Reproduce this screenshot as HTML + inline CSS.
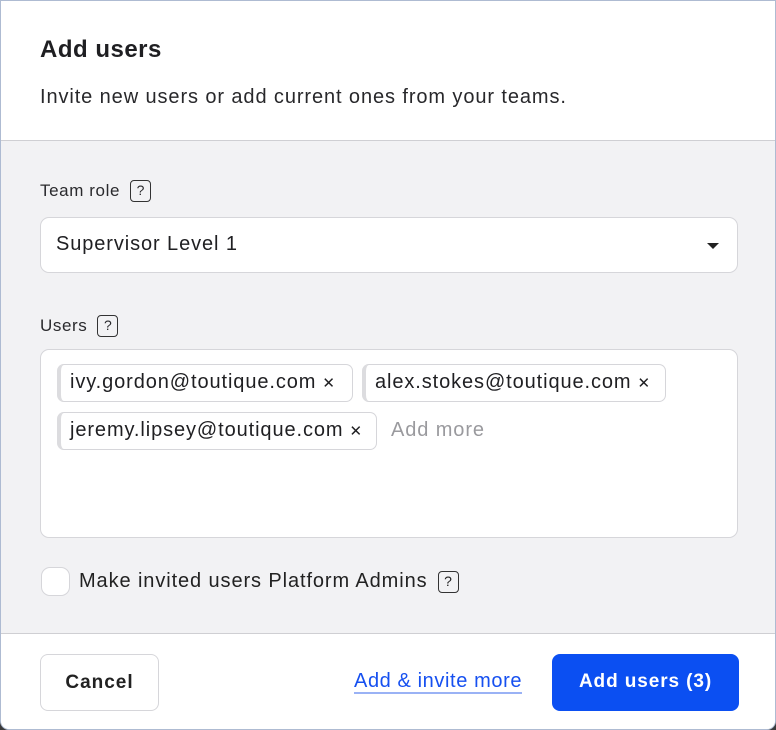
<!DOCTYPE html>
<html><head><style>
*{box-sizing:border-box;margin:0;padding:0}
body{width:776px;height:730px;background:#3a3a3a;font-family:"Liberation Sans",sans-serif;color:#1f1f22;overflow:hidden}
.m{position:absolute;left:0;top:0;width:776px;height:730px;background:#f2f2f4;border:1px solid #aebbd2;border-radius:0 0 9px 9px;overflow:hidden}
.hd{position:absolute;left:0;top:0;width:100%;height:140px;background:#fff;border-bottom:1px solid #cfcfd3}
h1{position:absolute;left:39px;top:35px;font-size:24px;font-weight:600;letter-spacing:0.5px}
.sub{position:absolute;left:39px;top:85px;font-size:20px;letter-spacing:0.9px;color:#28282b}
.lbl{position:absolute;left:39px;font-size:17px;letter-spacing:0.6px;color:#2a2a2d;display:flex;align-items:center}
.q{display:inline-block;width:21px;height:22px;border:1.5px solid #333;border-radius:4px;font-size:14px;letter-spacing:0;text-align:center;line-height:19px;margin-left:10px;font-weight:400}
.sel{position:absolute;left:39px;top:216px;width:698px;height:56px;background:#fff;border:1px solid #d6d6da;border-radius:9px;font-size:20px;letter-spacing:0.9px;padding:15px 15px}
.tri{position:absolute;right:18px;top:25px;width:0;height:0;border-left:6px solid transparent;border-right:6px solid transparent;border-top:6px solid #222}
.ub{position:absolute;left:39px;top:348px;width:698px;height:189px;background:#fff;border:1px solid #d6d6da;border-radius:9px}
.chip{position:absolute;height:38px;border:1px solid #d6d6da;border-left:4px solid #dcdcdf;border-radius:7px;font-size:20px;letter-spacing:0.9px;padding:6px 8px 0 9px;white-space:nowrap}
.chip span{font-size:15px;margin-left:6px;letter-spacing:0}
.ph{position:absolute;left:350px;top:69px;font-size:20px;letter-spacing:0.9px;color:#9a9a9e}
.cb{position:absolute;left:40px;top:566px;width:29px;height:29px;border:1px solid #d6d6da;background:#fff;border-radius:9px}
.ft{position:absolute;left:0;top:632px;width:100%;height:98px;background:#fff;border-top:1px solid #cfcfd3}
.btn{position:absolute;top:20px;height:57px;border-radius:8px;font-size:19px;font-weight:700;text-align:center;line-height:55px}
</style></head><body>
<div class="m">
<div class="hd"><h1>Add users</h1><div class="sub">Invite new users or add current ones from your teams.</div></div>
<div class="lbl" style="top:179px">Team role<span class="q">?</span></div>
<div class="sel">Supervisor Level 1<div class="tri"></div></div>
<div class="lbl" style="top:314px">Users<span class="q">?</span></div>
<div class="ub">
<div class="chip" style="left:16px;top:14px;width:296px">ivy.gordon@toutique.com<span>✕</span></div>
<div class="chip" style="left:321px;top:14px;width:304px">alex.stokes@toutique.com<span>✕</span></div>
<div class="chip" style="left:16px;top:62px;width:320px">jeremy.lipsey@toutique.com<span>✕</span></div>
<div class="ph">Add more</div>
</div>
<div class="cb"></div>
<div class="lbl" style="top:569px;left:78px;font-size:20px;letter-spacing:0.9px;color:#222">Make invited users Platform Admins<span class="q" style="margin-left:10px">?</span></div>
<div class="ft">
<div class="btn" style="left:39px;width:119px;border:1px solid #d6d6da;color:#222;letter-spacing:1px">Cancel</div>
<div style="position:absolute;left:353px;top:36px;font-size:20px;letter-spacing:0.6px;color:#1650f0;border-bottom:2px solid #9ab2f5;line-height:22px">Add &amp; invite more</div>
<div class="btn" style="left:551px;width:187px;background:#0b4ff2;color:#fff;letter-spacing:0.9px">Add users (3)</div>
</div>
</div>
</body></html>
